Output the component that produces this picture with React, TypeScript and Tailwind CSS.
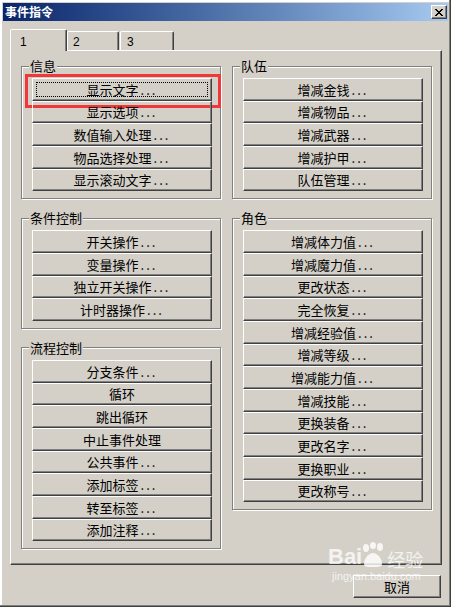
import React from "react";

const groups = {
  info: ["显示文字", "显示选项", "数值输入处理", "物品选择处理", "显示滚动文字"],
  cond: ["开关操作", "变量操作", "独立开关操作", "计时器操作"],
  flow: [
    { t: "分支条件", d: true },
    { t: "循环", d: false },
    { t: "跳出循环", d: false },
    { t: "中止事件处理", d: false },
    { t: "公共事件", d: true },
    { t: "添加标签", d: true },
    { t: "转至标签", d: true },
    { t: "添加注释", d: true },
  ],
  party: ["增减金钱", "增减物品", "增减武器", "增减护甲", "队伍管理"],
  actor: [
    "增减体力值",
    "增减魔力值",
    "更改状态",
    "完全恢复",
    "增减经验值",
    "增减等级",
    "增减能力值",
    "增减技能",
    "更换装备",
    "更改名字",
    "更换职业",
    "更改称号",
  ],
};

function Btn({ label, dots = true, focused = false }: { label: string; dots?: boolean; focused?: boolean }) {
  return (
    <div className="relative h-[22.67px] w-[180px] flex items-center justify-center border border-t-white border-l-white border-r-[#404040] border-b-[#404040] shadow-[inset_-1px_-1px_#808080] text-[13px] leading-none text-black">
      <span>{label}</span>
      {dots && <span className="ml-[2px] tracking-[2px]">...</span>}
      {focused && (
        <>
          <span className="absolute inset-[3px] border border-dotted border-black" />
          {/* red annotation box */}
          <span className="absolute left-[-8px] top-[-5px] w-[196px] h-[34px] border-[3px] border-[#f0383a]" />
        </>
      )}
    </div>
  );
}

function Group({ title, children }: { title: string; children: React.ReactNode }) {
  return (
    <fieldset className="w-[200px] border border-[#808080] shadow-[inset_1px_1px_#fff,1px_1px_#fff] pl-[10px] pr-[8px] pt-[5px] pb-[7px]">
      <legend className="-ml-[3px] px-[1px] bg-[#d4d0c8] text-[13px] leading-[14px] text-black">{title}</legend>
      <div className="flex flex-col">{children}</div>
    </fieldset>
  );
}

export default function App() {
  return (
    <div className="relative w-[451px] h-[607px] bg-[#d4d0c8] p-[3px] flex flex-col font-['Noto_Sans_CJK_SC',sans-serif] shadow-[inset_-1px_-1px_#404040,inset_-2px_-2px_#808080,inset_2px_2px_#fff]">
      {/* title bar */}
      <div className="h-[18px] flex items-center justify-between pl-[2px] pr-[1px] bg-linear-to-r from-[#0a246a] to-[#a6caf0]">
        <span className="text-white font-bold text-[12px] leading-none">事件指令</span>
        <div className="w-[16px] h-[14px] flex items-center justify-center bg-[#d4d0c8] border border-t-white border-l-white border-r-[#404040] border-b-[#404040] shadow-[inset_-1px_-1px_#808080]">
          <svg width="8" height="7" viewBox="0 0 8 7">
            <path d="M0 0h2v1h1v1h2V1h1V0h2v1H7v1H6v1H5v1h1v1h1v1h1v1H6V6H5V5H3v1H2v1H0V6h1V5h1V4h1V3H2V2H1V1H0z" fill="#000" />
          </svg>
        </div>
      </div>

      {/* tabs */}
      <div className="flex items-end h-[22px] pl-[7px] mt-[8px] -mb-[1px] text-[12px] leading-none font-['Liberation_Sans',sans-serif]">
        <div className="relative z-10 w-[57px] h-[22px] bg-[#d4d0c8] border-t border-l border-t-white border-l-white border-r border-r-[#404040] shadow-[inset_-1px_0_#808080] rounded-t-[2px] pl-[9px] pt-[6px]">
          1
        </div>
        <div className="w-[52px] h-[19px] mb-[1px] border-t border-l border-t-white border-l-white border-r border-r-[#404040] shadow-[inset_-1px_0_#808080] rounded-t-[2px] pl-[5px] pt-[4px]">
          2
        </div>
        <div className="w-[54px] h-[19px] mb-[1px] ml-[1px] border-t border-l border-t-white border-l-white border-r border-r-[#404040] shadow-[inset_-1px_0_#808080] rounded-t-[2px] pl-[6px] pt-[4px]">
          3
        </div>
      </div>

      {/* tab panel */}
      <div className="w-[432px] h-[515px] ml-[7px] border border-t-white border-l-white border-r-[#404040] border-b-[#404040] shadow-[inset_-1px_-1px_#808080] pl-[10px] pt-[8px] flex gap-[11px]">
        <div className="flex flex-col gap-[12px]">
          <Group title="信息">
            {groups.info.map((t, i) => (
              <Btn key={t} label={t} focused={i === 0} />
            ))}
          </Group>
          <Group title="条件控制">
            {groups.cond.map((t) => (
              <Btn key={t} label={t} />
            ))}
          </Group>
          <Group title="流程控制">
            {groups.flow.map((b) => (
              <Btn key={b.t} label={b.t} dots={b.d} />
            ))}
          </Group>
        </div>
        <div className="flex flex-col gap-[12px]">
          <Group title="队伍">
            {groups.party.map((t) => (
              <Btn key={t} label={t} />
            ))}
          </Group>
          <Group title="角色">
            {groups.actor.map((t) => (
              <Btn key={t} label={t} />
            ))}
          </Group>
        </div>
      </div>

      {/* footer */}
      <div className="flex justify-end pr-[7px] pt-[10px]">
        <div className="w-[88px] h-[23px] flex items-center justify-center border border-t-white border-l-white border-r-[#404040] border-b-[#404040] shadow-[inset_-1px_-1px_#808080] text-[13px] leading-none text-black">
          取消
        </div>
      </div>

      {/* watermark */}
      <div className="absolute left-[328px] top-[542px] flex flex-col items-start text-white/75 pointer-events-none">
        <div className="flex items-end leading-none">
          <span className="font-['Liberation_Sans',sans-serif] font-bold text-[22px]">Bai</span>
          <svg width="28" height="26" viewBox="0 0 28 26" className="-mx-[2px]">
            <g fill="rgba(255,255,255,0.8)">
              <ellipse cx="6" cy="6" rx="3" ry="4" />
              <ellipse cx="13" cy="3.5" rx="3" ry="3.5" />
              <ellipse cx="20" cy="5" rx="3" ry="4" />
              <path d="M4 22c0-6 5-11 9-11s9 5 9 11c0 3-4 3-9 3s-9 0-9-3z" />
            </g>
          </svg>
          <span className="font-['Noto_Sans_CJK_SC',sans-serif] text-[18px] ml-[1px]">经验</span>
        </div>
        <span className="font-['Liberation_Sans',sans-serif] text-[11px] leading-none mt-[3px] ml-[4px]">jingyan.baidu.com</span>
      </div>
    </div>
  );
}
